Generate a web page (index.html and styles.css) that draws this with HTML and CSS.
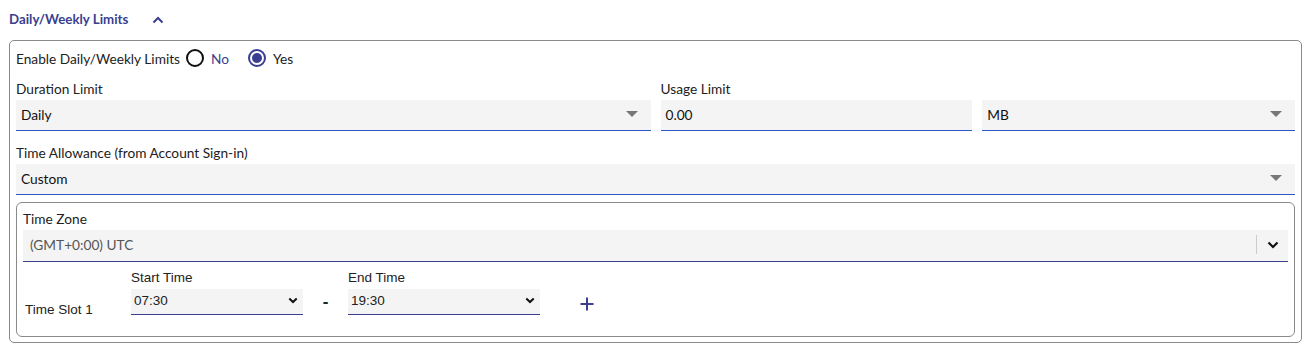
FILE: index.html
```html
<!DOCTYPE html>
<html lang="en">
  <head>
    <meta charset="UTF-8" />
    <title>Daily/Weekly Limits</title>
    <link rel="stylesheet" href="styles.css">
  </head>
  <body>
    <div class="section-head">
      <span class="section-title">Daily/Weekly Limits</span>
      <svg class="caret-up" width="12" height="8" viewBox="0 0 12 8"><path d="M1.5 6.5 L6 2 L10.5 6.5" fill="none" stroke="#3a3f8f" stroke-width="2"/></svg>
    </div>

    <div class="limits-box">
      <div class="enable-row">
        <span>Enable Daily/Weekly Limits</span>
        <label class="radio"><span class="radio-dot"></span><span class="radio-no">No</span></label>
        <label class="radio"><span class="radio-dot checked"></span><span>Yes</span></label>
      </div>

      <div class="field-row">
        <div class="field duration">
          <div class="field-label">Duration Limit</div>
          <div class="select-box"><span>Daily</span><span class="tri"></span></div>
        </div>
        <div class="field usage">
          <div class="field-label">Usage Limit</div>
          <div class="select-box"><span>0.00</span></div>
        </div>
        <div class="field unit">
          <div class="field-label">&nbsp;</div>
          <div class="select-box"><span>MB</span><span class="tri"></span></div>
        </div>
      </div>

      <div class="field">
        <div class="field-label">Time Allowance (from Account Sign-in)</div>
        <div class="select-box"><span>Custom</span><span class="tri"></span></div>
      </div>

      <div class="custom-box">
        <div class="field-label">Time Zone</div>
        <div class="tz-select">
          <span>(GMT+0:00) UTC</span>
          <span class="tz-end">
            <span class="tz-sep"></span>
            <svg width="12" height="8" viewBox="0 0 12 8"><path d="M1.5 1.5 L6 6 L10.5 1.5" fill="none" stroke="#111" stroke-width="2.2"/></svg>
          </span>
        </div>

        <div class="slot-row">
          <div class="slot-name">Time Slot 1</div>
          <div class="slot-field start">
            <div class="slot-label">Start Time</div>
            <div class="slot-select"><span>07:30</span><svg width="10" height="7" viewBox="0 0 10 7"><path d="M1.3 1.5 L5 5 L8.7 1.5" fill="none" stroke="#111" stroke-width="2"/></svg></div>
          </div>
          <div class="dash">-</div>
          <div class="slot-field end">
            <div class="slot-label">End Time</div>
            <div class="slot-select"><span>19:30</span><svg width="10" height="7" viewBox="0 0 10 7"><path d="M1.3 1.5 L5 5 L8.7 1.5" fill="none" stroke="#111" stroke-width="2"/></svg></div>
          </div>
          <svg class="plus" width="14" height="14" viewBox="0 0 14 14"><path d="M7 0.5 V13.5 M0.5 7 H13.5" stroke="#3a3f8f" stroke-width="2"/></svg>
        </div>
      </div>
    </div>
  </body>
</html>
```

FILE: styles.css
```css
body {
  margin: 0;
  padding: 0 9px;
  font-family: Lato, "Noto Sans", sans-serif;
  font-size: 13.7px;
  color: #222;
  background: #fff;
}
.section-head {
  display: flex;
  align-items: center;
  height: 38px;
}
.section-title {
  color: #3a3f8f;
  font-weight: bold;
  font-size: 13.3px;
}
.caret-up {
  margin-left: 24px;
  margin-top: 1px;
}
.limits-box {
  margin-top: 2px;
  border: 1px solid #8a8a8a;
  border-radius: 5px;
  padding: 7px 6px 5px 6px;
  width: 1279px;
}
.enable-row {
  display: flex;
  align-items: center;
  height: 20px;
}
.radio {
  display: flex;
  align-items: center;
  margin-left: 6px;
}
.radio + .radio {
  margin-left: 19px;
}
.radio-dot {
  box-sizing: border-box;
  width: 18px;
  height: 18px;
  border: 2px solid #111;
  border-radius: 50%;
  margin-right: 7px;
  position: relative;
}
.radio-dot.checked {
  border-color: #3a3f8f;
}
.radio-dot.checked::after {
  content: "";
  position: absolute;
  left: 2px;
  top: 2px;
  width: 10px;
  height: 10px;
  border-radius: 50%;
  background: #3a3f8f;
}
.radio-no {
  color: #3a3f8f;
}
.field-row {
  display: flex;
  gap: 10px;
  margin-top: 3px;
}
.field.duration {
  width: 635px;
}
.field.usage {
  width: 312px;
}
.field.unit {
  width: 313px;
}
.field-label {
  height: 22px;
  line-height: 22px;
}
.limits-box > .field {
  margin-top: 11px;
}
.field-row .field-label {
  margin-top: 7px;
}
.select-box {
  box-sizing: border-box;
  height: 31px;
  background: #f4f4f4;
  border-bottom: 1px solid #2c58c8;
  display: flex;
  align-items: center;
  justify-content: space-between;
  padding: 0 13px 2px 5px;
  color: #111;
}
.tri {
  width: 0;
  height: 0;
  border-left: 6px solid transparent;
  border-right: 6px solid transparent;
  border-top: 6px solid #777;
}
.custom-box {
  margin-top: 7px;
  border: 1px solid #8a8a8a;
  border-radius: 6px;
  padding: 5px 6px 0 6px;
  height: 128px;
}
.tz-select {
  box-sizing: border-box;
  height: 32px;
  background: #f4f4f4;
  border-bottom: 1px solid #3a3f8f;
  display: flex;
  align-items: center;
  justify-content: space-between;
  padding: 0 9px 2px 7px;
  color: #555;
}
.tz-end {
  display: flex;
  align-items: center;
}
.tz-sep {
  width: 1px;
  height: 19px;
  background: #ccc;
  margin-right: 10px;
}
.slot-row {
  display: flex;
  align-items: flex-end;
  font-family: "Liberation Sans", Arial, sans-serif;
  font-size: 13.5px;
  margin-top: 7px;
}
.slot-name {
  width: 106px;
  padding-left: 2px;
  margin-bottom: -2px;
}
.slot-label {
  height: 20px;
  line-height: 18px;
}
.slot-select {
  box-sizing: border-box;
  height: 26px;
  background: #f4f4f4;
  border-bottom: 1px solid #3a3f8f;
  display: flex;
  align-items: center;
  justify-content: space-between;
  padding: 0 5px 3px 3px;
}
.slot-field.start {
  width: 172px;
}
.slot-field.end {
  width: 192px;
}
.dash {
  width: 45px;
  text-align: center;
  font-weight: bold;
  font-size: 17px;
  margin-bottom: 3px;
}
.plus {
  margin-left: 40px;
  margin-bottom: 4px;
}
```
